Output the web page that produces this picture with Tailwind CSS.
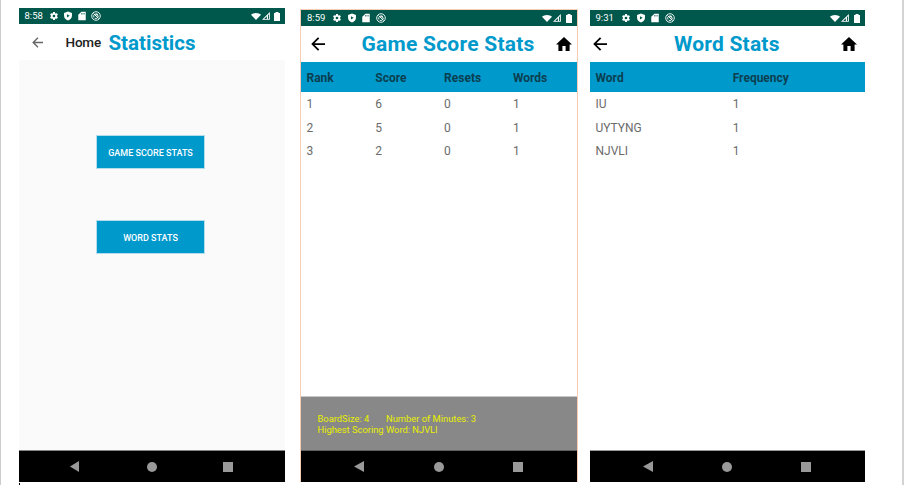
<!DOCTYPE html>
<html lang="en">
<head>
<meta charset="utf-8">
<title>Statistics screens</title>
<script src="https://cdn.jsdelivr.net/npm/@tailwindcss/browser@4"></script>
</head>
<body class="bg-white font-[Roboto,sans-serif]">
<svg class="hidden">
  <symbol id="gear" viewBox="0 0 24 24"><path d="M19.14 12.94c.04-.3.06-.61.06-.94 0-.32-.02-.64-.07-.94l2.03-1.58a.49.49 0 0 0 .12-.61l-1.92-3.32a.49.49 0 0 0-.59-.22l-2.39.96c-.5-.38-1.03-.7-1.62-.94L14.4 2.81a.48.48 0 0 0-.48-.41h-3.84a.47.47 0 0 0-.47.41l-.36 2.54c-.59.24-1.13.57-1.62.94l-2.39-.96a.48.48 0 0 0-.59.22L2.74 8.87a.47.47 0 0 0 .12.61l2.03 1.58c-.05.3-.09.63-.09.94s.02.64.07.94l-2.03 1.58a.49.49 0 0 0-.12.61l1.92 3.32c.12.22.37.29.59.22l2.39-.96c.5.38 1.03.7 1.62.94l.36 2.54c.05.24.24.41.48.41h3.84c.24 0 .44-.17.47-.41l.36-2.54c.59-.24 1.13-.56 1.62-.94l2.39.96c.22.08.47 0 .59-.22l1.92-3.32a.47.47 0 0 0-.12-.61zM12 15.200a3.200 3.200 0 1 1 0-6.400 3.200 3.200 0 0 1 0 6.400z"/></symbol>
  <symbol id="shield" viewBox="0 0 24 24"><path fill-rule="evenodd" d="M12 1 2.500 4.500v7c0 5.500 4.300 10 9.500 11.500 5.200-1.500 9.500-6 9.500-11.500v-7zM9.500 7.500v8l6.500-4z"/></symbol>
  <symbol id="sd" viewBox="0 0 24 24"><path fill-rule="evenodd" d="M21 2H10.500L3 9v13h18zM10.500 5h1.500v3.500h-1.500zM13.500 5H15v3.500h-1.500zM16.500 5H18v3.500h-1.500z"/></symbol>
  <symbol id="sync" viewBox="0 0 24 24"><g fill="none" stroke="currentColor" stroke-width="2.200"><circle cx="12" cy="12" r="10.300"/><path d="M7 15.500a6 6 0 0 1 9.500-7M17.500 11a6 6 0 0 1-8.500 6.500M6 6l12 12M10 10l5-2v5"/></g></symbol>
  <symbol id="wifi" viewBox="0 0 24 20" preserveAspectRatio="none"><path d="M12 20 0 5C3 2.200 7 0 12 0S21 2.200 24 5z"/></symbol>
  <symbol id="signal" viewBox="0 0 24 24"><path fill-rule="evenodd" d="M0 23.500H23.500V0zM6.500 20.700 14.500 12.700V20.700zM18 20.700V9.200l2.700-2.700V20.700z"/></symbol>
  <symbol id="battery" viewBox="0 0 12 20" preserveAspectRatio="none"><path d="M3 0h6v2h3v18H0V2h3z"/></symbol>
  <symbol id="arrow" viewBox="0 0 16 16"><path fill="none" stroke="currentColor" stroke-width="2" d="M16 8H2M8.700 1 1.700 8l7 7"/></symbol>
  <symbol id="home" viewBox="0 0 20 17" preserveAspectRatio="none"><path d="M8 17v-6h4v6h5V9h3L10 0 0 9h3v8z"/></symbol>
</svg>

<div class="relative flex h-[485px] w-[904px] items-start overflow-hidden border-l border-r-2 border-l-[#cccccc] border-r-[#d4d4d4] pl-[18px]">

  <section class="mt-2 flex h-[474px] w-[266px] shrink-0 flex-col bg-[#fafafa]">
    <div class="flex h-4 items-center bg-[#00574b] pr-[5px] pl-[5.500px] text-white">
      <span class="w-[24px] text-[9.500px] leading-4">8:58</span>
      <div class="flex flex-1 gap-[4.300px]">
        <svg class="size-[10px] fill-current"><use href="#gear"/></svg>
        <svg class="size-[10px] fill-current"><use href="#shield"/></svg>
        <svg class="size-[10px] fill-current"><use href="#sd"/></svg>
        <svg class="size-[10px] fill-current"><use href="#sync"/></svg>
      </div>
      <svg class="h-[7px] w-[10px] fill-current"><use href="#wifi"/></svg>
      <svg class="ml-px size-[8px] fill-current"><use href="#signal"/></svg>
      <svg class="ml-[4px] h-[9px] w-[6px] fill-current"><use href="#battery"/></svg>
    </div>
    <div class="flex h-9 items-center bg-white pl-[13px]">
      <svg class="size-[11px] text-[#666]"><use href="#arrow"/></svg>
      <span class="ml-[22.500px] w-[43px] pt-px text-[13.500px] font-medium tracking-[-0.200px] text-[#222]">Home</span>
      <h1 class="pt-[2px] text-[20.500px] leading-[34px] font-bold text-[#0099cc]">Statistics</h1>
    </div>
    <div class="flex flex-1 flex-col items-start gap-[51px] pt-[75px] pl-[77px] text-[9px] font-medium text-white">
      <button class="h-[34px] w-[109px] border border-[#b5dcea] bg-[#0099cc] pt-[3px]">GAME SCORE STATS</button>
      <button class="h-[34px] w-[109px] border border-[#b5dcea] bg-[#0099cc] pt-[3px]">WORD STATS</button>
    </div>
    <div class="flex h-8 items-center border-t border-[#858585] bg-black pl-[51px]">
      <svg class="h-[11px] w-[9px] fill-[#999]" viewBox="0 0 10 11" preserveAspectRatio="none"><path d="M10 0v11L0 5.500z"/></svg>
      <i class="ml-[68px] size-[10px] rounded-full bg-[#999]"></i>
      <i class="ml-[66px] size-[10px] bg-[#999]"></i>
    </div>
  </section>

  <section class="mt-[9px] ml-[15px] flex h-[473px] w-[278px] shrink-0 flex-col border border-b-0 border-[#f8cbb5] bg-white">
    <div class="flex h-4 items-center bg-[#00574b] pr-[5px] pl-[6px] text-white">
      <span class="w-[25px] text-[9.500px] leading-4">8:59</span>
      <div class="flex flex-1 gap-[4.700px]">
        <svg class="size-[10px] fill-current"><use href="#gear"/></svg>
        <svg class="size-[10px] fill-current"><use href="#shield"/></svg>
        <svg class="size-[10px] fill-current"><use href="#sd"/></svg>
        <svg class="size-[10px] fill-current"><use href="#sync"/></svg>
      </div>
      <svg class="h-[7px] w-[10px] fill-current"><use href="#wifi"/></svg>
      <svg class="ml-px size-[8px] fill-current"><use href="#signal"/></svg>
      <svg class="ml-[5px] h-[9px] w-[6px] fill-current"><use href="#battery"/></svg>
    </div>
    <div class="flex h-9 items-center pl-[10px]">
      <svg class="size-[14px] text-black"><use href="#arrow"/></svg>
      <h1 class="ml-[36.500px] w-[194.500px] pt-px text-[21px] leading-[35px] font-bold tracking-[0.240px] text-[#0099cc]">Game Score Stats</h1>
      <svg class="h-[14px] w-[16px] fill-black"><use href="#home"/></svg>
    </div>
    <div class="grid h-[30px] grid-cols-[repeat(4,68.800px)] items-center bg-[#0099cc] pt-px pl-[5.500px] text-[12px] font-bold text-[#0b3f50]">
      <span>Rank</span><span>Score</span><span>Resets</span><span>Words</span>
    </div>
    <div class="grid flex-1 auto-rows-[23.600px] grid-cols-[repeat(4,68.800px)] content-start items-center pt-[0.500px] pl-[5.500px] text-[12px] text-[#6b6b6b]">
      <span>1</span><span>6</span><span>0</span><span>1</span>
      <span>2</span><span>5</span><span>0</span><span>1</span>
      <span>3</span><span>2</span><span>0</span><span>1</span>
    </div>
    <div class="h-[54px] border-t border-[#c8c8c8] bg-[#888888] pt-[17px] pl-[16.500px] text-[9.350px] leading-[10.500px] text-[#e8f000]">
      <p class="flex"><span class="w-[68.500px]">BoardSize: 4</span><span>Number of Minutes: 3</span></p>
      <p>Highest Scoring Word: NJVLI</p>
    </div>
    <div class="flex h-8 items-center border-t border-[#606060] bg-black pl-[53px]">
      <svg class="h-[11px] w-[10px] fill-[#999]" viewBox="0 0 10 11"><path d="M10 0v11L0 5.500z"/></svg>
      <i class="ml-[70px] size-[10px] rounded-full bg-[#999]"></i>
      <i class="ml-[69px] size-[10px] bg-[#999]"></i>
    </div>
  </section>

  <section class="mt-[10px] ml-[12px] flex h-[472px] w-[275px] shrink-0 flex-col bg-white">
    <div class="flex h-4 items-center bg-[#00574b] pr-[5px] pl-[5.500px] text-white">
      <span class="w-[25.500px] text-[9.500px] leading-4">9:31</span>
      <div class="flex flex-1 gap-[4.700px]">
        <svg class="size-[10px] fill-current"><use href="#gear"/></svg>
        <svg class="size-[10px] fill-current"><use href="#shield"/></svg>
        <svg class="size-[10px] fill-current"><use href="#sd"/></svg>
        <svg class="size-[10px] fill-current"><use href="#sync"/></svg>
      </div>
      <svg class="h-[7px] w-[10px] fill-current"><use href="#wifi"/></svg>
      <svg class="ml-px size-[8px] fill-current"><use href="#signal"/></svg>
      <svg class="ml-[5px] h-[9px] w-[6px] fill-current"><use href="#battery"/></svg>
    </div>
    <div class="flex h-9 items-center pl-[3px]">
      <svg class="size-[14px] text-black"><use href="#arrow"/></svg>
      <h1 class="ml-[67px] w-[166.500px] pt-px text-[21px] leading-[35px] font-bold tracking-[0.200px] text-[#0099cc]">Word Stats</h1>
      <svg class="h-[14px] w-[16px] fill-black"><use href="#home"/></svg>
    </div>
    <div class="grid h-[30px] grid-cols-[137.200px_1fr] items-center bg-[#0099cc] pt-px pl-[5.500px] text-[12px] font-bold text-[#0b3f50]">
      <span>Word</span><span>Frequency</span>
    </div>
    <div class="grid flex-1 auto-rows-[23.600px] grid-cols-[137.200px_1fr] content-start items-center pt-[0.500px] pl-[5.500px] text-[12px] text-[#6b6b6b]">
      <span>IU</span><span>1</span>
      <span>UYTYNG</span><span>1</span>
      <span>NJVLI</span><span>1</span>
    </div>
    <div class="flex h-8 items-center border-t border-[#999] bg-black pl-[53px]">
      <svg class="h-[11px] w-[10px] fill-[#999]" viewBox="0 0 10 11"><path d="M10 0v11L0 5.500z"/></svg>
      <i class="ml-[69px] size-[10px] rounded-full bg-[#999]"></i>
      <i class="ml-[69px] size-[10px] bg-[#999]"></i>
    </div>
  </section>
  <i class="absolute bottom-0 left-[18px] h-[2px] w-px bg-black"></i>
</div>
</body>
</html>
